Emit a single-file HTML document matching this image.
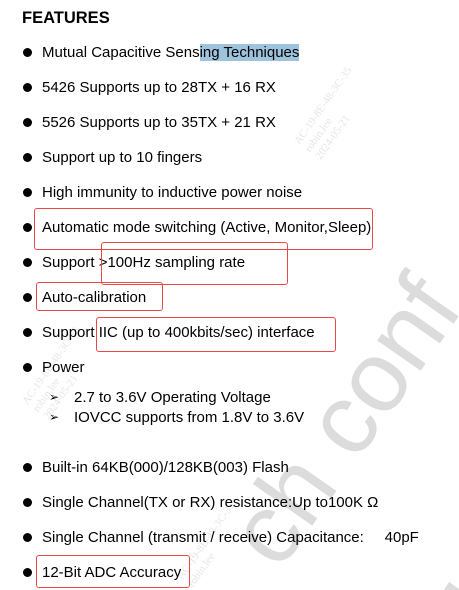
<!DOCTYPE html>
<html style="overflow:hidden;width:459px;height:590px"><head><meta charset="utf-8"><style>
body{margin:0;width:459px;height:590px;background:#fff;position:relative;overflow:hidden;font-family:"Liberation Sans",sans-serif;color:#000}
.t{position:absolute;font-size:15px;white-space:nowrap;line-height:18px}
.b{position:absolute;width:9px;height:9px;border-radius:50%;background:#000;left:23px}
.a{position:absolute;left:49px;font-size:12px}
.r{position:absolute;border:1.5px solid #e84a4a;border-radius:3px}
.clip{position:absolute;left:0;top:0;width:459px;height:590px;overflow:hidden}
.wm{position:absolute;color:#dcdcdc;font-size:100px;transform:rotate(-55deg);transform-origin:left top;white-space:nowrap;font-family:"Liberation Sans",sans-serif}
.sm{position:absolute;color:#e6e6e6;font-size:11px;font-family:"Liberation Serif",serif;transform:rotate(-55deg);transform-origin:left top;white-space:nowrap;line-height:13px}
</style></head><body>
<div class="clip">
<div class="wm" style="left:205px;top:520px">ch conf</div>
<div class="wm" style="left:390px;top:600px">use</div>
<div class="sm" style="left:292px;top:140px">AC-19-8E-48-3C-35<br>robin.lee<br>2024-05-21</div>
<div class="sm" style="left:20px;top:400px">AC-19-8E-48-3C-35<br>robin.lee<br>2024-05-21</div>
<div class="sm" style="left:175px;top:575px">AC-19-8E-48-3C-35<br>robin.lee</div>
</div>
<div class="t" style="left:22px;top:9px;font-weight:bold;font-size:16.5px">FEATURES</div>

<div class="b" style="top:48px"></div><div class="t" style="left:42px;top:44px">Mutual Capacitive Sens<span style="background:#9ec3dd">ing Techniques</span></div>
<div class="b" style="top:83px"></div><div class="t" style="left:42px;top:79px">5426 Supports up to 28TX + 16 RX</div>
<div class="b" style="top:118px"></div><div class="t" style="left:42px;top:114px">5526 Supports up to 35TX + 21 RX</div>
<div class="b" style="top:153px"></div><div class="t" style="left:42px;top:149px">Support up to 10 fingers</div>
<div class="b" style="top:188px"></div><div class="t" style="left:42px;top:184px">High immunity to inductive power noise</div>
<div class="b" style="top:223px"></div><div class="t" style="left:42px;top:219px">Automatic mode switching (Active, Monitor,Sleep)</div>
<div class="b" style="top:258px"></div><div class="t" style="left:42px;top:254px">Support &gt;100Hz sampling rate</div>
<div class="b" style="top:293px"></div><div class="t" style="left:42px;top:289px">Auto-calibration</div>
<div class="b" style="top:328px"></div><div class="t" style="left:42px;top:324px">Support IIC (up to 400kbits/sec) interface</div>
<div class="b" style="top:363px"></div><div class="t" style="left:42px;top:359px">Power</div>
<div class="a" style="top:390px">➢</div><div class="t" style="left:74px;top:389px">2.7 to 3.6V Operating Voltage</div>
<div class="a" style="top:410px">➢</div><div class="t" style="left:74px;top:409px">IOVCC supports from 1.8V to 3.6V</div>
<div class="b" style="top:463px"></div><div class="t" style="left:42px;top:459px">Built-in 64KB(000)/128KB(003) Flash</div>
<div class="b" style="top:498px"></div><div class="t" style="left:42px;top:494px">Single Channel(TX or RX) resistance:Up to100K Ω</div>
<div class="b" style="top:533px"></div><div class="t" style="left:42px;top:529px">Single Channel (transmit / receive) Capacitance:&nbsp;&nbsp;&nbsp;&nbsp;&nbsp;40pF</div>
<div class="b" style="top:568px"></div><div class="t" style="left:42px;top:564px">12-Bit ADC Accuracy</div>

<div class="r" style="left:34px;top:208px;width:337px;height:40px"></div>
<div class="r" style="left:101px;top:242px;width:185px;height:41px"></div>
<div class="r" style="left:36px;top:282px;width:125px;height:27px"></div>
<div class="r" style="left:96px;top:317px;width:238px;height:33px"></div>
<div class="r" style="left:36px;top:555px;width:152px;height:31px"></div>
</body></html>
